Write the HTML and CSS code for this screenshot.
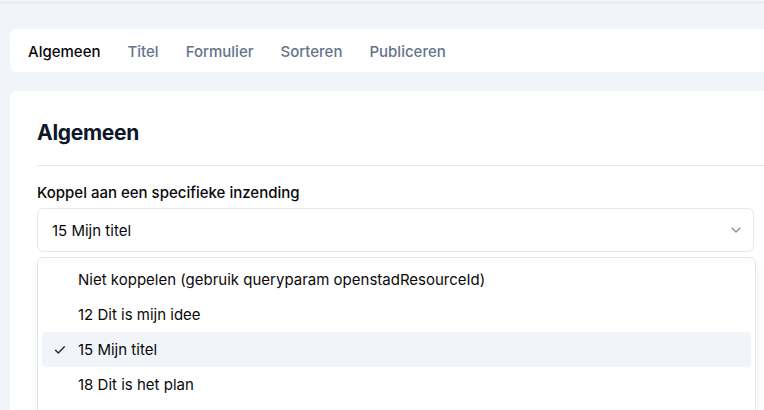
FILE: index.html
```html
<!DOCTYPE html>
<html lang="nl">
<head>
    <meta charset="UTF-8">
    <title>Widget instellingen</title>
    <link rel="stylesheet" href="styles.css">
</head>
<body>
    <div class="topline"></div>
    <div class="page">
        <div class="tabs">
            <span class="tab active">Algemeen</span>
            <span class="tab">Titel</span>
            <span class="tab">Formulier</span>
            <span class="tab">Sorteren</span>
            <span class="tab">Publiceren</span>
        </div>

        <div class="card">
            <h1>Algemeen</h1>
            <div class="divider"></div>
            <label class="label">Koppel aan een specifieke inzending</label>
            <div class="select">
                <span>15 Mijn titel</span>
                <svg class="chevron" width="16" height="16" viewBox="0 0 16 16" fill="none">
                    <path d="M4 6l4 4 4-4" stroke="#71717a" stroke-width="1.3" stroke-linecap="round" stroke-linejoin="round"/>
                </svg>
            </div>
            <div class="menu">
                <div class="option"><span class="check"></span>Niet koppelen (gebruik queryparam openstadResourceId)</div>
                <div class="option"><span class="check"></span>12 Dit is mijn idee</div>
                <div class="option selected">
                    <span class="check">
                        <svg width="14" height="14" viewBox="0 0 14 14" fill="none">
                            <path d="M2.5 7.2l2.8 2.8 6-6.2" stroke="#1f2937" stroke-width="1.4" stroke-linecap="round" stroke-linejoin="round"/>
                        </svg>
                    </span>15 Mijn titel
                </div>
                <div class="option"><span class="check"></span>18 Dit is het plan</div>
            </div>
        </div>
    </div>
</body>
</html>
```

FILE: styles.css
```css
* {
    box-sizing: border-box;
}
body {
    margin: 0;
    background: #f1f5f9;
    font-family: Inter, "Noto Sans", Arial, sans-serif;
    color: #0f172a;
    overflow: hidden;
    height: 410px;
}
.topline {
    height: 3px;
    border-bottom: 1px solid #e2e8f0;
}
.page {
    padding: 26px 0 0 10px;
}
.tabs {
    background: #fff;
    border-radius: 6px 0 0 6px;
    height: 43px;
    display: flex;
    align-items: center;
    gap: 27px;
    padding-left: 18px;
    padding-top: 1px;
    margin-right: -10px;
}
.tab {
    font-size: 15px;
    font-weight: 500;
    color: #64748b;
}
.tab.active {
    color: #09090b;
}
.card {
    background: #fff;
    border-radius: 6px 0 0 0;
    margin-top: 19px;
    margin-right: -10px;
    padding: 27px 0 0 27px;
    height: 330px;
}
h1 {
    margin: 0;
    font-size: 21px;
    font-weight: 700;
    letter-spacing: -0.3px;
    color: #0f172a;
    line-height: 30px;
}
.divider {
    height: 1px;
    background: #e2e8f0;
    margin: 17px 0 17px;
}
.label {
    display: block;
    font-size: 15px;
    font-weight: 500;
    line-height: 20px;
    color: #09090b;
}
.select {
    margin-top: 5px;
    width: 717px;
    height: 44px;
    border: 1px solid #e2e8f0;
    border-radius: 6px;
    display: flex;
    align-items: center;
    justify-content: space-between;
    padding: 0 9px 0 14px;
    font-size: 15px;
    color: #09090b;
}
.chevron {
    opacity: 0.8;
}
.menu {
    margin-top: 5px;
    width: 719px;
    height: 170px;
    border: 1px solid #e2e8f0;
    border-radius: 6px;
    box-shadow: 0 4px 8px rgba(15, 23, 42, 0.06);
    padding: 4px;
}
.option {
    height: 35px;
    display: flex;
    align-items: center;
    font-size: 15px;
    color: #09090b;
    border-radius: 4px;
}
.option.selected {
    background: #f1f5f9;
}
.check {
    width: 36px;
    padding-left: 11px;
    display: flex;
    align-items: center;
}
```
